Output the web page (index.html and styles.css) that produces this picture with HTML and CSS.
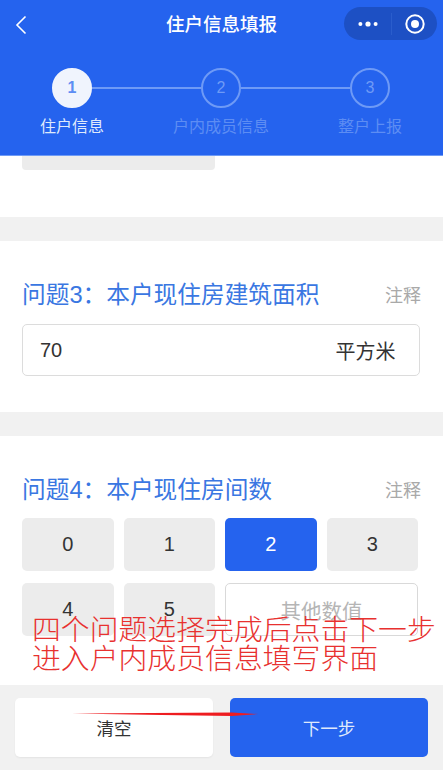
FILE: index.html
```html
<!DOCTYPE html>
<html lang="zh-CN">
<head>
    <meta charset="UTF-8">
    <meta name="viewport" content="width=device-width, initial-scale=1.0">
    <title>住户信息填报</title>
    <link rel="stylesheet" href="styles.css">
</head>
<body>
    <div class="page">
        <header class="header">
            <div class="navbar">
                <svg class="back" width="12" height="20" viewBox="0 0 12 20"><path d="M10.5 1.5 2 10l8.5 8.5" fill="none" stroke="#fff" stroke-width="1.6"/></svg>
                <div class="nav-title">住户信息填报</div>
                <div class="capsule">
                    <svg width="20" height="8" viewBox="0 0 20 8"><circle cx="2.4" cy="4" r="2" fill="#fff"/><circle cx="10" cy="4" r="2.6" fill="#fff"/><circle cx="17.6" cy="4" r="2" fill="#fff"/></svg>
                    <span class="capsule-line"></span>
                    <svg width="20" height="20" viewBox="0 0 20 20"><circle cx="10" cy="10" r="8.7" fill="none" stroke="#fff" stroke-width="2"/><circle cx="10" cy="10" r="4" fill="#fff"/></svg>
                </div>
            </div>
            <div class="step-track">
                <div class="step-dot active">1</div>
                <span class="step-line"></span>
                <div class="step-dot">2</div>
                <span class="step-line"></span>
                <div class="step-dot">3</div>
            </div>
            <div class="step-labels">
                <div class="step-label active">住户信息</div>
                <div class="step-label">户内成员信息</div>
                <div class="step-label">整户上报</div>
            </div>
        </header>

        <main class="content">
            <div class="section first">
                <div class="leftover"></div>
            </div>
            <div class="section">
                <div class="question">
                    <div class="question-title">问题3&#xFF1A;本户现住房建筑面积</div>
                    <div class="note">注释</div>
                </div>
                <div class="area-input">
                    <span class="area-value">70</span>
                    <span>平方米</span>
                </div>
            </div>
            <div class="section last">
                <div class="question">
                    <div class="question-title">问题4&#xFF1A;本户现住房间数</div>
                    <div class="note">注释</div>
                </div>
                <div class="options">
                    <div class="option">0</div>
                    <div class="option">1</div>
                    <div class="option selected">2</div>
                    <div class="option">3</div>
                    <div class="option">4</div>
                    <div class="option">5</div>
                    <div class="option other">其他数值</div>
                </div>
            </div>
        </main>

        <footer class="footer">
            <button class="btn btn-clear">清空</button>
            <button class="btn btn-next">下一步</button>
        </footer>

        <div class="remark">四个问题选择完成后点击下一步<br>进入户内成员信息填写界面</div>
        <svg class="arrow" width="190" height="8" viewBox="0 0 190 8"><path d="M0 3.5 160 2.6 186 4 160 6 90 5Z" fill="#ee1c20"/></svg>
    </div>
</body>
</html>
```

FILE: styles.css
```css
* {
    box-sizing: border-box;
}
body {
    margin: 0;
    font-family: "Liberation Sans", "Noto Sans CJK SC", sans-serif;
    color: #333;
    background-color: #f1f1f1;
}
.page {
    position: relative;
    display: flex;
    flex-direction: column;
    height: 770px;
    overflow: hidden;
}

/* blue header */
.header {
    height: 156px;
    flex: none;
    padding-top: 7px;
    background-color: #2563ee;
    border-bottom: 1px solid #6f9bf5;
    color: #fff;
}
.navbar {
    display: grid;
    grid-template-columns: 1fr auto 1fr;
    align-items: center;
    height: 33px;
    padding: 0 6px;
}
.back {
    margin: 3px 0 0 9px;
}
.nav-title {
    font-size: 18.5px;
    font-weight: 500;
    padding-bottom: 2px;
}
.capsule {
    justify-self: end;
    display: flex;
    align-items: center;
    justify-content: space-between;
    width: 93px;
    height: 33px;
    padding: 0 12px 0 14px;
    border-radius: 17px;
    background-color: #1d50c4;
}
.capsule-line {
    width: 1px;
    height: 22px;
    background-color: #2a5dcc;
}
.step-track {
    display: flex;
    align-items: center;
    margin-top: 28px;
    padding: 0 53px 0 52px;
}
.step-dot {
    display: flex;
    align-items: center;
    justify-content: center;
    flex: none;
    width: 40px;
    height: 40px;
    border: 2px solid #6e9af6;
    border-radius: 50%;
    font-size: 16px;
    color: #6e9af6;
}
.step-dot.active {
    border-color: #f0f4fd;
    background-color: #f0f4fd;
    color: #5d8df3;
    font-weight: bold;
}
.step-line {
    flex: 1;
    height: 2px;
    background-color: #6e9af6;
}
.step-labels {
    display: flex;
    gap: 29px;
    margin-top: 7px;
    padding-left: 12px;
}
.step-label {
    width: 120px;
    text-align: center;
    font-size: 16px;
    line-height: 24px;
    color: #5d8df3;
}
.step-label.active {
    color: #dfe9fc;
}

/* questions */
.content {
    flex: 1;
    display: flex;
    flex-direction: column;
    gap: 24px;
}
.section {
    background-color: #fff;
    padding: 38px 22px 36px;
}
.section.first {
    height: 61px;
    padding: 0 0 0 22px;
}
.section.last {
    flex: 1;
    padding-bottom: 0;
}
.leftover {
    width: 193px;
    height: 14px;
    background-color: #ececec;
    border-radius: 0 0 4px 4px;
}
.question {
    display: flex;
    justify-content: space-between;
    align-items: center;
    height: 30px;
}
.question-title {
    padding-bottom: 2px;
    font-size: 23.7px;
    color: #3a77e2;
    white-space: nowrap;
}
.note {
    font-size: 18px;
    color: #a9a9a9;
}
.area-input {
    display: flex;
    justify-content: space-between;
    align-items: center;
    height: 52px;
    margin: 15px 1.5px 0 0;
    padding: 0 23px 0 17px;
    border: 1px solid #dcdcdc;
    border-radius: 5px;
    font-size: 20px;
}
.options {
    display: grid;
    grid-template-columns: repeat(4, 91.5px);
    grid-auto-rows: 53px;
    gap: 12px 10px;
    margin-top: 14px;
}
.option {
    display: flex;
    align-items: center;
    justify-content: center;
    background-color: #ececec;
    border-radius: 5px;
    font-size: 20px;
}
.option.selected {
    background-color: #2563ee;
    color: #fff;
}
.option.other {
    grid-column: span 2;
    background-color: #fff;
    border: 1px solid #d9d9d9;
    font-size: 20.5px;
    color: #b5b5b5;
}

/* bottom buttons */
.footer {
    flex: none;
    display: flex;
    gap: 17px;
    height: 85px;
    padding: 13px 15px;
    background-color: #f1f1f1;
}
.btn {
    width: 198px;
    height: 59px;
    border: none;
    border-radius: 5px;
    font-family: inherit;
    font-size: 17.5px;
}
.btn-clear {
    background-color: #fff;
    color: #333;
    box-shadow: 0 1px 2px rgba(0, 0, 0, 0.06);
}
.btn-next {
    background-color: #2563ee;
    color: #dfe9fc;
}

/* red note drawn over the screenshot */
.remark {
    position: absolute;
    left: 32px;
    top: 616px;
    font-size: 28.85px;
    line-height: 28.5px;
    font-weight: 300;
    color: #e8312f;
    white-space: nowrap;
}
.arrow {
    position: absolute;
    left: 72px;
    top: 710px;
}
```
